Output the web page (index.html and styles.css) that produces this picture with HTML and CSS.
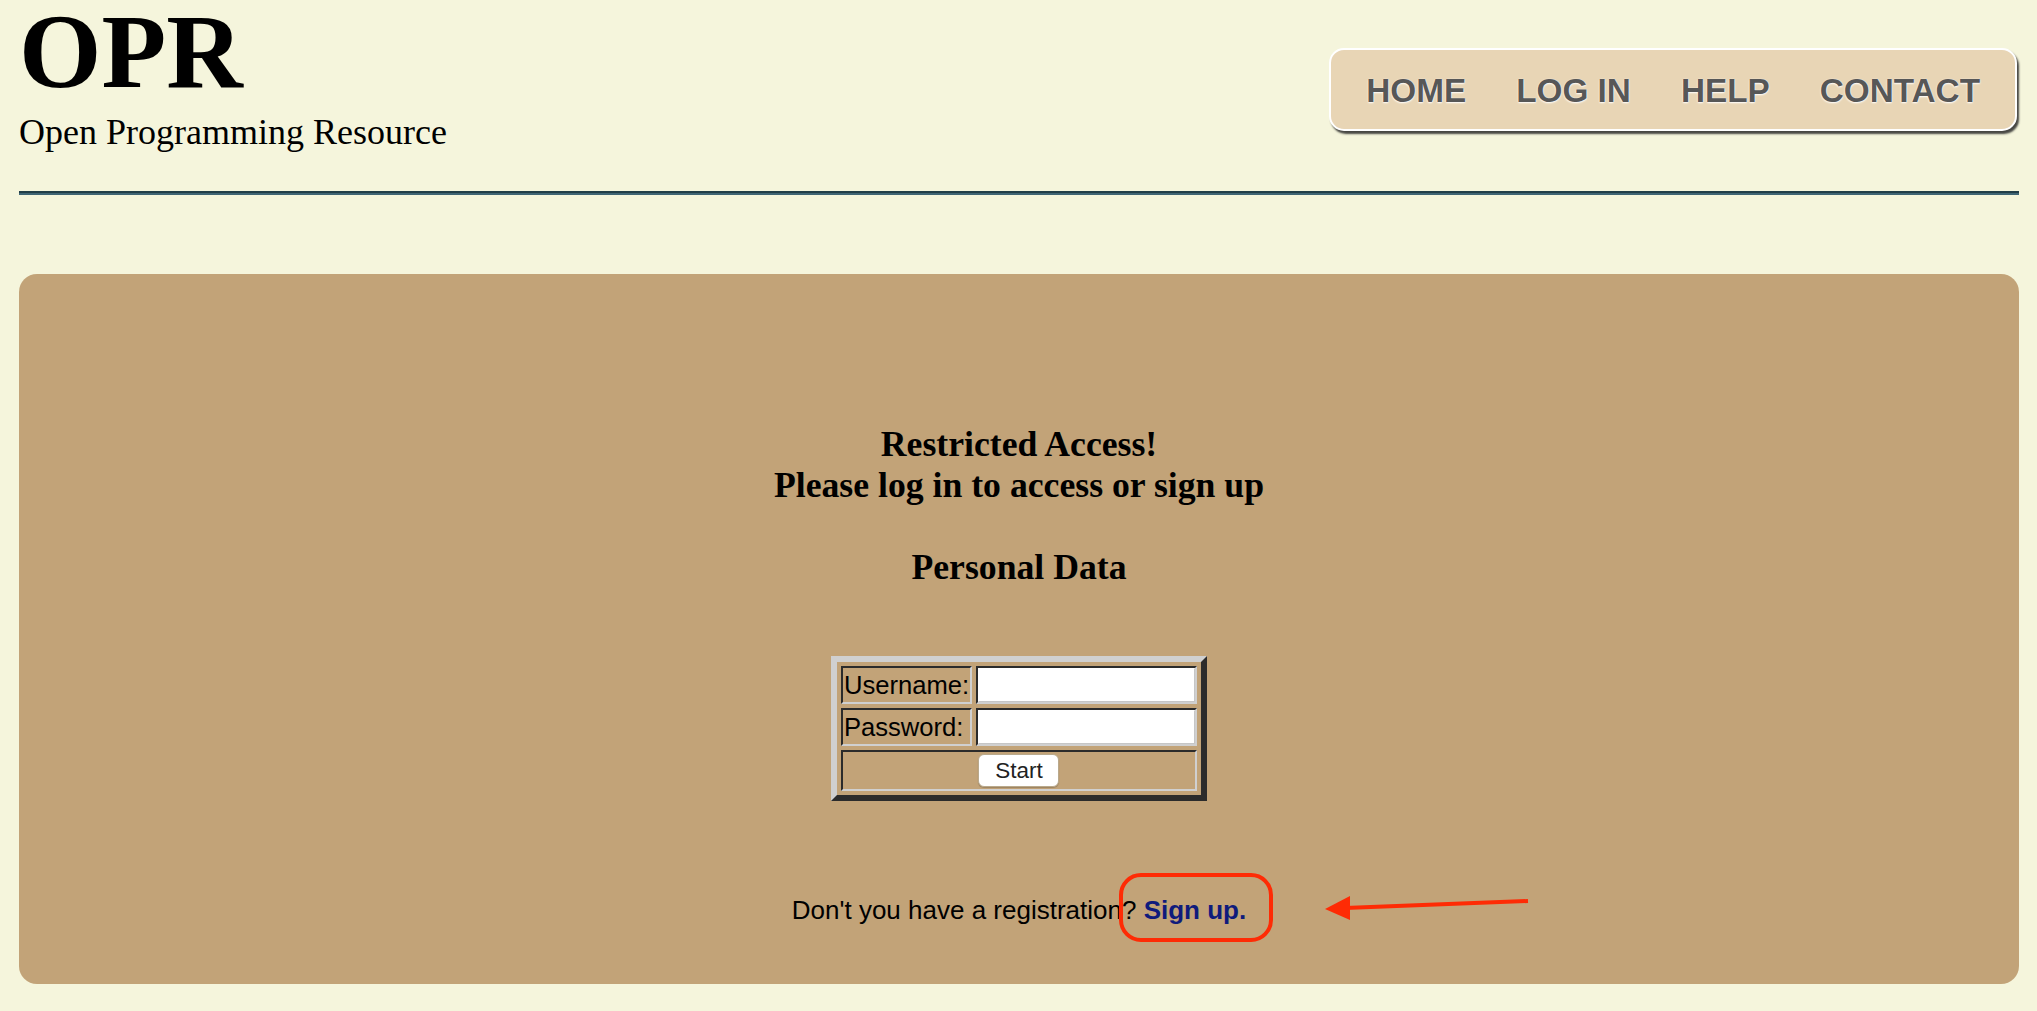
FILE: index.html
```html
<!DOCTYPE html>
<html lang="en">
<head>
<meta charset="utf-8">
<title>OPR - Open Programming Resource</title>
<link rel="stylesheet" href="styles.css">
</head>
<body>
<div class="page">
  <header class="site-header">
    <div class="brand">
      <h1 class="logo">OPR</h1>
      <p class="tagline">Open Programming Resource</p>
    </div>
    <nav class="main-nav">
      <ul>
        <li><a href="#">HOME</a></li>
        <li><a href="#">LOG IN</a></li>
        <li><a href="#">HELP</a></li>
        <li><a href="#">CONTACT</a></li>
      </ul>
    </nav>
  </header>
  <div class="rule"></div>
  <main class="panel">
    <h2 class="notice">Restricted Access!<br>Please log in to access or sign up<br><br>Personal Data</h2>
    <form class="login-form" action="#">
      <table class="login-table">
        <tr>
          <td class="label">Username:</td>
          <td class="field"><input type="text" class="text-input"></td>
        </tr>
        <tr>
          <td class="label">Password:</td>
          <td class="field"><input type="password" class="text-input"></td>
        </tr>
        <tr>
          <td class="actions" colspan="2"><button type="button" class="start-btn">Start</button></td>
        </tr>
      </table>
    </form>
    <p class="signup">Don't you have a registration? <a href="#" class="signup-link">Sign up.</a></p>
  </main>
</div>
<svg class="annotation" width="2037" height="1011" viewBox="0 0 2037 1011" aria-hidden="true">
  <rect x="1121" y="875" width="150" height="65" rx="20" ry="20" fill="none" stroke="#fe2b05" stroke-width="4"/>
  <line x1="1528" y1="901" x2="1345" y2="908" stroke="#fe2b05" stroke-width="4" stroke-linecap="butt"/>
  <polygon points="1325,909 1350,896 1350,920" fill="#fe2b05"/>
</svg>
</body>
</html>
```

FILE: styles.css
```css
html, body {
  margin: 0;
  padding: 0;
  background: #f5f5dc;
}

body {
  font-family: "Liberation Serif", "Times New Roman", serif;
  color: #000;
  position: relative;
  width: 2037px;
  height: 1011px;
  overflow: hidden;
}

.page {
  padding: 0 18px 0 19px;
}

.site-header {
  display: flex;
  justify-content: space-between;
  align-items: flex-start;
}

.logo {
  margin: 2px 0 0;
  font-size: 106px;
  line-height: 100px;
  font-weight: bold;
}

.tagline {
  margin: 10px 0 0;
  font-size: 36px;
  line-height: 41px;
}

.main-nav {
  margin: 48px 2px 0 0;
  background: #e8d5b5;
  border: 2px solid #ffffff;
  border-radius: 15px;
  box-shadow: 2px 3px 2px rgba(40, 40, 40, 0.85);
}

.main-nav ul {
  display: flex;
  list-style: none;
  margin: 0;
  padding: 3px 10px 1px;
}

.main-nav a {
  display: block;
  padding: 0 25px;
  font-family: "Liberation Sans", Arial, sans-serif;
  font-weight: bold;
  font-size: 33.3px;
  line-height: 75px;
  color: #575757;
  text-decoration: none;
  text-shadow: 0 1px 2px #ffffff, 0 0 1px #ffffff;
}

.rule {
  margin-top: 38px;
  height: 0;
  border-top: 2px solid #213e48;
  border-bottom: 2px solid #3e6473;
}

.panel {
  margin-top: 79px;
  background: #c2a378;
  border-radius: 18px;
  padding: 150px 0 59px;
  text-align: center;
}

.notice {
  margin: 0;
  font-size: 35.7px;
  line-height: 41px;
  font-weight: bold;
}

.login-form {
  margin: 0;
}

.login-table {
  margin: 68px auto 0;
  border-collapse: separate;
  border-spacing: 4px;
  border-style: solid;
  border-width: 6px;
  border-color: #d0d0d0 #2b2b2b #2b2b2b #d0d0d0;
  font-family: "Liberation Sans", Arial, sans-serif;
  font-size: 25.6px;
}

.login-table td {
  border-style: solid;
  border-width: 2px;
  border-color: #2b2b2b #d0d0d0 #d0d0d0 #2b2b2b;
  vertical-align: middle;
}

.login-table .label {
  width: 125px;
  padding: 0 1px;
  text-align: left;
  line-height: 29px;
}

.login-table .field {
  padding: 0;
  line-height: 0;
}

.text-input {
  box-sizing: border-box;
  width: 217px;
  height: 34px;
  margin: 0;
  border: 1px solid #c6c6c6;
  border-top-color: #ffffff;
  border-left-color: #ffffff;
  background: #ffffff;
  padding: 0 4px;
  font-family: "Liberation Sans", Arial, sans-serif;
  font-size: 22px;
}

.login-table .actions {
  padding: 2px 0;
  text-align: center;
  line-height: 0;
}

.start-btn {
  box-sizing: border-box;
  width: 81px;
  height: 33px;
  margin: 0;
  padding: 0;
  background: #ffffff;
  border: 1px solid #b9a98c;
  border-radius: 6px;
  box-shadow: 0 1px 1px rgba(0, 0, 0, 0.2);
  font-family: "Liberation Sans", Arial, sans-serif;
  font-size: 22.5px;
  line-height: 31px;
  color: #222222;
}

.signup {
  margin: 94px 0 0;
  font-family: "Liberation Sans", Arial, sans-serif;
  font-size: 26px;
  line-height: 30px;
}

.signup-link {
  color: #0f1b7c;
  font-weight: bold;
  text-decoration: none;
}

.annotation {
  position: absolute;
  top: 0;
  left: 0;
  pointer-events: none;
}
```
